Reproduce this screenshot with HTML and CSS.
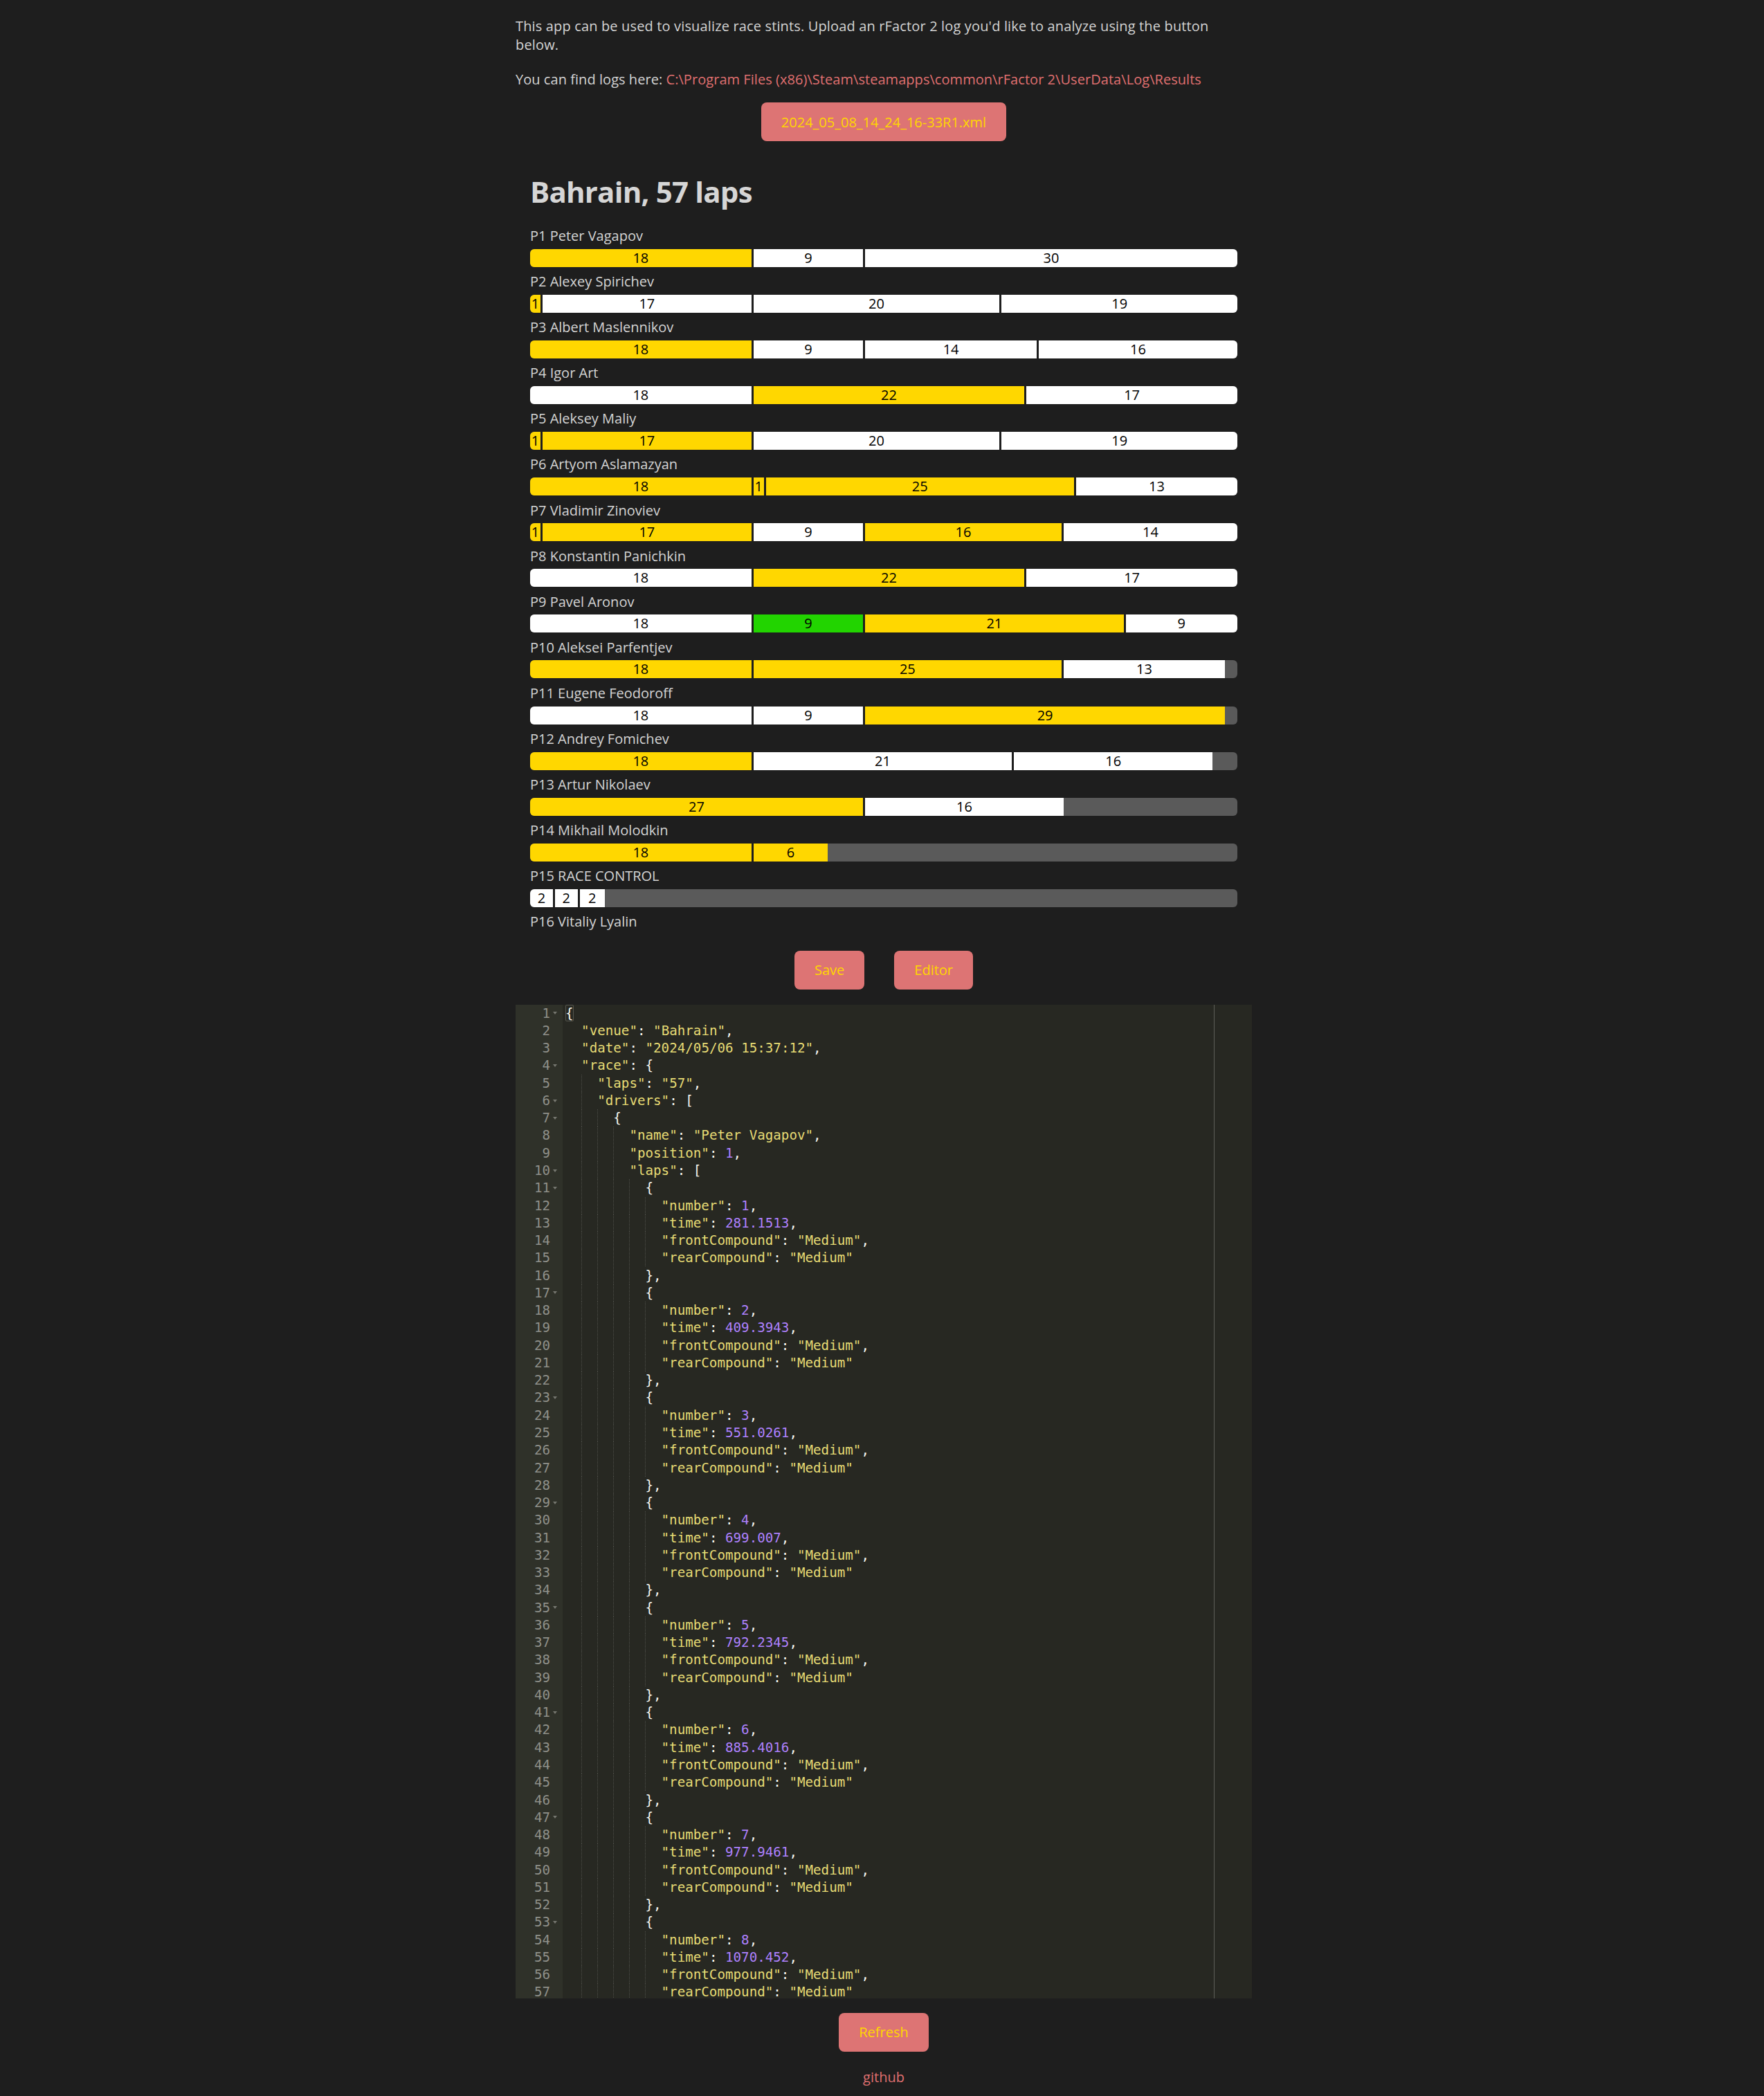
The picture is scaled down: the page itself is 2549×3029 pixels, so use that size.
FILE: index.html
```html
<!DOCTYPE html>
<html lang="en">
<head>
<meta charset="utf-8">
<title>Race stints</title>
<link rel="stylesheet" href="styles.css">
</head>
<body>
<div class="page">
  <p class="intro intro-first">This app can be used to visualize race stints. Upload an rFactor 2 log you'd like to analyze using the button below.</p>
  <p class="intro intro-logs">You can find logs here: <a class="path">C:\Program Files (x86)\Steam\steamapps\common\rFactor 2\UserData\Log\Results</a></p>
  <div class="btn-row upload"><button class="btn">2024_05_08_14_24_16-33R1.xml</button></div>

  <section class="chart">
    <h1 class="chart-title">Bahrain, 57 laps</h1>
    <div class="driver"><div class="dname">P1 Peter Vagapov</div><div class="track"><div class="seg tyre-m" style="width:31.579%">18</div><div class="seg tyre-h" style="width:15.789%">9</div><div class="seg tyre-h" style="width:52.632%">30</div></div></div>
    <div class="driver"><div class="dname">P2 Alexey Spirichev</div><div class="track"><div class="seg tyre-m" style="width:1.754%">1</div><div class="seg tyre-h" style="width:29.825%">17</div><div class="seg tyre-h" style="width:35.088%">20</div><div class="seg tyre-h" style="width:33.333%">19</div></div></div>
    <div class="driver"><div class="dname">P3 Albert Maslennikov</div><div class="track"><div class="seg tyre-m" style="width:31.579%">18</div><div class="seg tyre-h" style="width:15.789%">9</div><div class="seg tyre-h" style="width:24.561%">14</div><div class="seg tyre-h" style="width:28.070%">16</div></div></div>
    <div class="driver"><div class="dname">P4 Igor Art</div><div class="track"><div class="seg tyre-h" style="width:31.579%">18</div><div class="seg tyre-m" style="width:38.596%">22</div><div class="seg tyre-h" style="width:29.825%">17</div></div></div>
    <div class="driver"><div class="dname">P5 Aleksey Maliy</div><div class="track"><div class="seg tyre-m" style="width:1.754%">1</div><div class="seg tyre-m" style="width:29.825%">17</div><div class="seg tyre-h" style="width:35.088%">20</div><div class="seg tyre-h" style="width:33.333%">19</div></div></div>
    <div class="driver"><div class="dname">P6 Artyom Aslamazyan</div><div class="track"><div class="seg tyre-m" style="width:31.579%">18</div><div class="seg tyre-m" style="width:1.754%">1</div><div class="seg tyre-m" style="width:43.860%">25</div><div class="seg tyre-h" style="width:22.807%">13</div></div></div>
    <div class="driver"><div class="dname">P7 Vladimir Zinoviev</div><div class="track"><div class="seg tyre-m" style="width:1.754%">1</div><div class="seg tyre-m" style="width:29.825%">17</div><div class="seg tyre-h" style="width:15.789%">9</div><div class="seg tyre-m" style="width:28.070%">16</div><div class="seg tyre-h" style="width:24.561%">14</div></div></div>
    <div class="driver"><div class="dname">P8 Konstantin Panichkin</div><div class="track"><div class="seg tyre-h" style="width:31.579%">18</div><div class="seg tyre-m" style="width:38.596%">22</div><div class="seg tyre-h" style="width:29.825%">17</div></div></div>
    <div class="driver"><div class="dname">P9 Pavel Aronov</div><div class="track"><div class="seg tyre-h" style="width:31.579%">18</div><div class="seg tyre-s" style="width:15.789%">9</div><div class="seg tyre-m" style="width:36.842%">21</div><div class="seg tyre-h" style="width:15.789%">9</div></div></div>
    <div class="driver"><div class="dname">P10 Aleksei Parfentjev</div><div class="track"><div class="seg tyre-m" style="width:31.579%">18</div><div class="seg tyre-m" style="width:43.860%">25</div><div class="seg tyre-h" style="width:22.807%">13</div></div></div>
    <div class="driver"><div class="dname">P11 Eugene Feodoroff</div><div class="track"><div class="seg tyre-h" style="width:31.579%">18</div><div class="seg tyre-h" style="width:15.789%">9</div><div class="seg tyre-m" style="width:50.877%">29</div></div></div>
    <div class="driver"><div class="dname">P12 Andrey Fomichev</div><div class="track"><div class="seg tyre-m" style="width:31.579%">18</div><div class="seg tyre-h" style="width:36.842%">21</div><div class="seg tyre-h" style="width:28.070%">16</div></div></div>
    <div class="driver"><div class="dname">P13 Artur Nikolaev</div><div class="track"><div class="seg tyre-m" style="width:47.368%">27</div><div class="seg tyre-h" style="width:28.070%">16</div></div></div>
    <div class="driver"><div class="dname">P14 Mikhail Molodkin</div><div class="track"><div class="seg tyre-m" style="width:31.579%">18</div><div class="seg tyre-m" style="width:10.526%">6</div></div></div>
    <div class="driver"><div class="dname">P15 RACE CONTROL</div><div class="track"><div class="seg tyre-h" style="width:3.509%">2</div><div class="seg tyre-h" style="width:3.509%">2</div><div class="seg tyre-h" style="width:3.509%">2</div></div></div>
    <div class="driver"><div class="dname">P16 Vitaliy Lyalin</div></div>
  </section>

  <div class="btn-row actions"><button class="btn">Save</button><button class="btn">Editor</button></div>

  <div class="editor">
    <div class="gutter">
      <div class="gc">1<span class="fw on"></span></div>
      <div class="gc">2<span class="fw"></span></div>
      <div class="gc">3<span class="fw"></span></div>
      <div class="gc">4<span class="fw on"></span></div>
      <div class="gc">5<span class="fw"></span></div>
      <div class="gc">6<span class="fw on"></span></div>
      <div class="gc">7<span class="fw on"></span></div>
      <div class="gc">8<span class="fw"></span></div>
      <div class="gc">9<span class="fw"></span></div>
      <div class="gc">10<span class="fw on"></span></div>
      <div class="gc">11<span class="fw on"></span></div>
      <div class="gc">12<span class="fw"></span></div>
      <div class="gc">13<span class="fw"></span></div>
      <div class="gc">14<span class="fw"></span></div>
      <div class="gc">15<span class="fw"></span></div>
      <div class="gc">16<span class="fw"></span></div>
      <div class="gc">17<span class="fw on"></span></div>
      <div class="gc">18<span class="fw"></span></div>
      <div class="gc">19<span class="fw"></span></div>
      <div class="gc">20<span class="fw"></span></div>
      <div class="gc">21<span class="fw"></span></div>
      <div class="gc">22<span class="fw"></span></div>
      <div class="gc">23<span class="fw on"></span></div>
      <div class="gc">24<span class="fw"></span></div>
      <div class="gc">25<span class="fw"></span></div>
      <div class="gc">26<span class="fw"></span></div>
      <div class="gc">27<span class="fw"></span></div>
      <div class="gc">28<span class="fw"></span></div>
      <div class="gc">29<span class="fw on"></span></div>
      <div class="gc">30<span class="fw"></span></div>
      <div class="gc">31<span class="fw"></span></div>
      <div class="gc">32<span class="fw"></span></div>
      <div class="gc">33<span class="fw"></span></div>
      <div class="gc">34<span class="fw"></span></div>
      <div class="gc">35<span class="fw on"></span></div>
      <div class="gc">36<span class="fw"></span></div>
      <div class="gc">37<span class="fw"></span></div>
      <div class="gc">38<span class="fw"></span></div>
      <div class="gc">39<span class="fw"></span></div>
      <div class="gc">40<span class="fw"></span></div>
      <div class="gc">41<span class="fw on"></span></div>
      <div class="gc">42<span class="fw"></span></div>
      <div class="gc">43<span class="fw"></span></div>
      <div class="gc">44<span class="fw"></span></div>
      <div class="gc">45<span class="fw"></span></div>
      <div class="gc">46<span class="fw"></span></div>
      <div class="gc">47<span class="fw on"></span></div>
      <div class="gc">48<span class="fw"></span></div>
      <div class="gc">49<span class="fw"></span></div>
      <div class="gc">50<span class="fw"></span></div>
      <div class="gc">51<span class="fw"></span></div>
      <div class="gc">52<span class="fw"></span></div>
      <div class="gc">53<span class="fw on"></span></div>
      <div class="gc">54<span class="fw"></span></div>
      <div class="gc">55<span class="fw"></span></div>
      <div class="gc">56<span class="fw"></span></div>
      <div class="gc">57<span class="fw"></span></div>
    </div>
    <div class="code">
      <div class="cl"><span class="c"><span class="br">{</span></span></div>
      <div class="cl"><span class="ind"></span><span class="c"><span class="s">"venue"</span>: <span class="s">"Bahrain"</span>,</span></div>
      <div class="cl"><span class="ind"></span><span class="c"><span class="s">"date"</span>: <span class="s">"2024/05/06 15:37:12"</span>,</span></div>
      <div class="cl"><span class="ind"></span><span class="c"><span class="s">"race"</span>: {</span></div>
      <div class="cl"><span class="ind"></span><span class="ind g"></span><span class="c"><span class="s">"laps"</span>: <span class="s">"57"</span>,</span></div>
      <div class="cl"><span class="ind"></span><span class="ind g"></span><span class="c"><span class="s">"drivers"</span>: [</span></div>
      <div class="cl"><span class="ind"></span><span class="ind g"></span><span class="ind g"></span><span class="c">{</span></div>
      <div class="cl"><span class="ind"></span><span class="ind g"></span><span class="ind g"></span><span class="ind g"></span><span class="c"><span class="s">"name"</span>: <span class="s">"Peter Vagapov"</span>,</span></div>
      <div class="cl"><span class="ind"></span><span class="ind g"></span><span class="ind g"></span><span class="ind g"></span><span class="c"><span class="s">"position"</span>: <span class="n">1</span>,</span></div>
      <div class="cl"><span class="ind"></span><span class="ind g"></span><span class="ind g"></span><span class="ind g"></span><span class="c"><span class="s">"laps"</span>: [</span></div>
      <div class="cl"><span class="ind"></span><span class="ind g"></span><span class="ind g"></span><span class="ind g"></span><span class="ind g"></span><span class="c">{</span></div>
      <div class="cl"><span class="ind"></span><span class="ind g"></span><span class="ind g"></span><span class="ind g"></span><span class="ind g"></span><span class="ind g"></span><span class="c"><span class="s">"number"</span>: <span class="n">1</span>,</span></div>
      <div class="cl"><span class="ind"></span><span class="ind g"></span><span class="ind g"></span><span class="ind g"></span><span class="ind g"></span><span class="ind g"></span><span class="c"><span class="s">"time"</span>: <span class="n">281.1513</span>,</span></div>
      <div class="cl"><span class="ind"></span><span class="ind g"></span><span class="ind g"></span><span class="ind g"></span><span class="ind g"></span><span class="ind g"></span><span class="c"><span class="s">"frontCompound"</span>: <span class="s">"Medium"</span>,</span></div>
      <div class="cl"><span class="ind"></span><span class="ind g"></span><span class="ind g"></span><span class="ind g"></span><span class="ind g"></span><span class="ind g"></span><span class="c"><span class="s">"rearCompound"</span>: <span class="s">"Medium"</span></span></div>
      <div class="cl"><span class="ind"></span><span class="ind g"></span><span class="ind g"></span><span class="ind g"></span><span class="ind g"></span><span class="c">},</span></div>
      <div class="cl"><span class="ind"></span><span class="ind g"></span><span class="ind g"></span><span class="ind g"></span><span class="ind g"></span><span class="c">{</span></div>
      <div class="cl"><span class="ind"></span><span class="ind g"></span><span class="ind g"></span><span class="ind g"></span><span class="ind g"></span><span class="ind g"></span><span class="c"><span class="s">"number"</span>: <span class="n">2</span>,</span></div>
      <div class="cl"><span class="ind"></span><span class="ind g"></span><span class="ind g"></span><span class="ind g"></span><span class="ind g"></span><span class="ind g"></span><span class="c"><span class="s">"time"</span>: <span class="n">409.3943</span>,</span></div>
      <div class="cl"><span class="ind"></span><span class="ind g"></span><span class="ind g"></span><span class="ind g"></span><span class="ind g"></span><span class="ind g"></span><span class="c"><span class="s">"frontCompound"</span>: <span class="s">"Medium"</span>,</span></div>
      <div class="cl"><span class="ind"></span><span class="ind g"></span><span class="ind g"></span><span class="ind g"></span><span class="ind g"></span><span class="ind g"></span><span class="c"><span class="s">"rearCompound"</span>: <span class="s">"Medium"</span></span></div>
      <div class="cl"><span class="ind"></span><span class="ind g"></span><span class="ind g"></span><span class="ind g"></span><span class="ind g"></span><span class="c">},</span></div>
      <div class="cl"><span class="ind"></span><span class="ind g"></span><span class="ind g"></span><span class="ind g"></span><span class="ind g"></span><span class="c">{</span></div>
      <div class="cl"><span class="ind"></span><span class="ind g"></span><span class="ind g"></span><span class="ind g"></span><span class="ind g"></span><span class="ind g"></span><span class="c"><span class="s">"number"</span>: <span class="n">3</span>,</span></div>
      <div class="cl"><span class="ind"></span><span class="ind g"></span><span class="ind g"></span><span class="ind g"></span><span class="ind g"></span><span class="ind g"></span><span class="c"><span class="s">"time"</span>: <span class="n">551.0261</span>,</span></div>
      <div class="cl"><span class="ind"></span><span class="ind g"></span><span class="ind g"></span><span class="ind g"></span><span class="ind g"></span><span class="ind g"></span><span class="c"><span class="s">"frontCompound"</span>: <span class="s">"Medium"</span>,</span></div>
      <div class="cl"><span class="ind"></span><span class="ind g"></span><span class="ind g"></span><span class="ind g"></span><span class="ind g"></span><span class="ind g"></span><span class="c"><span class="s">"rearCompound"</span>: <span class="s">"Medium"</span></span></div>
      <div class="cl"><span class="ind"></span><span class="ind g"></span><span class="ind g"></span><span class="ind g"></span><span class="ind g"></span><span class="c">},</span></div>
      <div class="cl"><span class="ind"></span><span class="ind g"></span><span class="ind g"></span><span class="ind g"></span><span class="ind g"></span><span class="c">{</span></div>
      <div class="cl"><span class="ind"></span><span class="ind g"></span><span class="ind g"></span><span class="ind g"></span><span class="ind g"></span><span class="ind g"></span><span class="c"><span class="s">"number"</span>: <span class="n">4</span>,</span></div>
      <div class="cl"><span class="ind"></span><span class="ind g"></span><span class="ind g"></span><span class="ind g"></span><span class="ind g"></span><span class="ind g"></span><span class="c"><span class="s">"time"</span>: <span class="n">699.007</span>,</span></div>
      <div class="cl"><span class="ind"></span><span class="ind g"></span><span class="ind g"></span><span class="ind g"></span><span class="ind g"></span><span class="ind g"></span><span class="c"><span class="s">"frontCompound"</span>: <span class="s">"Medium"</span>,</span></div>
      <div class="cl"><span class="ind"></span><span class="ind g"></span><span class="ind g"></span><span class="ind g"></span><span class="ind g"></span><span class="ind g"></span><span class="c"><span class="s">"rearCompound"</span>: <span class="s">"Medium"</span></span></div>
      <div class="cl"><span class="ind"></span><span class="ind g"></span><span class="ind g"></span><span class="ind g"></span><span class="ind g"></span><span class="c">},</span></div>
      <div class="cl"><span class="ind"></span><span class="ind g"></span><span class="ind g"></span><span class="ind g"></span><span class="ind g"></span><span class="c">{</span></div>
      <div class="cl"><span class="ind"></span><span class="ind g"></span><span class="ind g"></span><span class="ind g"></span><span class="ind g"></span><span class="ind g"></span><span class="c"><span class="s">"number"</span>: <span class="n">5</span>,</span></div>
      <div class="cl"><span class="ind"></span><span class="ind g"></span><span class="ind g"></span><span class="ind g"></span><span class="ind g"></span><span class="ind g"></span><span class="c"><span class="s">"time"</span>: <span class="n">792.2345</span>,</span></div>
      <div class="cl"><span class="ind"></span><span class="ind g"></span><span class="ind g"></span><span class="ind g"></span><span class="ind g"></span><span class="ind g"></span><span class="c"><span class="s">"frontCompound"</span>: <span class="s">"Medium"</span>,</span></div>
      <div class="cl"><span class="ind"></span><span class="ind g"></span><span class="ind g"></span><span class="ind g"></span><span class="ind g"></span><span class="ind g"></span><span class="c"><span class="s">"rearCompound"</span>: <span class="s">"Medium"</span></span></div>
      <div class="cl"><span class="ind"></span><span class="ind g"></span><span class="ind g"></span><span class="ind g"></span><span class="ind g"></span><span class="c">},</span></div>
      <div class="cl"><span class="ind"></span><span class="ind g"></span><span class="ind g"></span><span class="ind g"></span><span class="ind g"></span><span class="c">{</span></div>
      <div class="cl"><span class="ind"></span><span class="ind g"></span><span class="ind g"></span><span class="ind g"></span><span class="ind g"></span><span class="ind g"></span><span class="c"><span class="s">"number"</span>: <span class="n">6</span>,</span></div>
      <div class="cl"><span class="ind"></span><span class="ind g"></span><span class="ind g"></span><span class="ind g"></span><span class="ind g"></span><span class="ind g"></span><span class="c"><span class="s">"time"</span>: <span class="n">885.4016</span>,</span></div>
      <div class="cl"><span class="ind"></span><span class="ind g"></span><span class="ind g"></span><span class="ind g"></span><span class="ind g"></span><span class="ind g"></span><span class="c"><span class="s">"frontCompound"</span>: <span class="s">"Medium"</span>,</span></div>
      <div class="cl"><span class="ind"></span><span class="ind g"></span><span class="ind g"></span><span class="ind g"></span><span class="ind g"></span><span class="ind g"></span><span class="c"><span class="s">"rearCompound"</span>: <span class="s">"Medium"</span></span></div>
      <div class="cl"><span class="ind"></span><span class="ind g"></span><span class="ind g"></span><span class="ind g"></span><span class="ind g"></span><span class="c">},</span></div>
      <div class="cl"><span class="ind"></span><span class="ind g"></span><span class="ind g"></span><span class="ind g"></span><span class="ind g"></span><span class="c">{</span></div>
      <div class="cl"><span class="ind"></span><span class="ind g"></span><span class="ind g"></span><span class="ind g"></span><span class="ind g"></span><span class="ind g"></span><span class="c"><span class="s">"number"</span>: <span class="n">7</span>,</span></div>
      <div class="cl"><span class="ind"></span><span class="ind g"></span><span class="ind g"></span><span class="ind g"></span><span class="ind g"></span><span class="ind g"></span><span class="c"><span class="s">"time"</span>: <span class="n">977.9461</span>,</span></div>
      <div class="cl"><span class="ind"></span><span class="ind g"></span><span class="ind g"></span><span class="ind g"></span><span class="ind g"></span><span class="ind g"></span><span class="c"><span class="s">"frontCompound"</span>: <span class="s">"Medium"</span>,</span></div>
      <div class="cl"><span class="ind"></span><span class="ind g"></span><span class="ind g"></span><span class="ind g"></span><span class="ind g"></span><span class="ind g"></span><span class="c"><span class="s">"rearCompound"</span>: <span class="s">"Medium"</span></span></div>
      <div class="cl"><span class="ind"></span><span class="ind g"></span><span class="ind g"></span><span class="ind g"></span><span class="ind g"></span><span class="c">},</span></div>
      <div class="cl"><span class="ind"></span><span class="ind g"></span><span class="ind g"></span><span class="ind g"></span><span class="ind g"></span><span class="c">{</span></div>
      <div class="cl"><span class="ind"></span><span class="ind g"></span><span class="ind g"></span><span class="ind g"></span><span class="ind g"></span><span class="ind g"></span><span class="c"><span class="s">"number"</span>: <span class="n">8</span>,</span></div>
      <div class="cl"><span class="ind"></span><span class="ind g"></span><span class="ind g"></span><span class="ind g"></span><span class="ind g"></span><span class="ind g"></span><span class="c"><span class="s">"time"</span>: <span class="n">1070.452</span>,</span></div>
      <div class="cl"><span class="ind"></span><span class="ind g"></span><span class="ind g"></span><span class="ind g"></span><span class="ind g"></span><span class="ind g"></span><span class="c"><span class="s">"frontCompound"</span>: <span class="s">"Medium"</span>,</span></div>
      <div class="cl"><span class="ind"></span><span class="ind g"></span><span class="ind g"></span><span class="ind g"></span><span class="ind g"></span><span class="ind g"></span><span class="c"><span class="s">"rearCompound"</span>: <span class="s">"Medium"</span></span></div>
    </div>
    <div class="print-margin"></div>
  </div>

  <div class="btn-row refresh"><button class="btn">Refresh</button></div>
  <div class="footer"><a class="gh">github</a></div>
</div>
</body>
</html>
```

FILE: styles.css
```css
* { box-sizing: border-box; }

body {
  margin: 0;
  background: #1e1e1e;
  color: #d4d4d4;
  font-family: "Open Sans", "Noto Sans", sans-serif;
  font-size: 20px;
  line-height: 27px;
}

.page {
  width: 1069px;
  margin: 0 auto;
  padding: 24px 0 0 5px;
}

.intro {
  margin: 0;
  letter-spacing: 0.15px;
}
.intro + .intro { margin-top: 23px; }
.intro-first { max-width: 1030px; }
.intro-logs { letter-spacing: 0.05px; }

.path, .gh {
  color: #e07070;
  text-decoration: none;
}

.btn-row {
  display: flex;
  justify-content: center;
  gap: 43px;
}

.btn {
  height: 56px;
  padding: 0 29px;
  border: none;
  border-radius: 8px;
  background: #dd7474;
  color: #ffd700;
  font-family: inherit;
  font-size: 20px;
}

.upload { margin-top: 20px; }

.chart { padding: 0 21px; }

.chart-title {
  margin: 48px 0 25px;
  font-size: 42px;
  line-height: 50px;
  font-weight: 700;
  letter-spacing: -0.8px;
  color: #d6d6d6;
}

.driver { margin-bottom: 7.5px; }

.track {
  display: flex;
  height: 26px;
  margin-top: 5.6px;
  background: #5a5a5a;
  border-radius: 6px;
  overflow: hidden;
}

.seg {
  height: 100%;
  line-height: 26px;
  text-align: center;
  color: #000;
  overflow: hidden;
  white-space: nowrap;
}
.seg:not(:last-child) { border-right: 3px solid #1e1e1e; }

.tyre-m { background: #ffd700; }
.tyre-h { background: #ffffff; }
.tyre-s { background: #22d400; }

.actions { margin-top: 28.2px; }

.editor {
  position: relative;
  display: flex;
  height: 1436px;
  margin-top: 22px;
  overflow: hidden;
  background: #272822;
  color: #f8f8f2;
  font-family: "DejaVu Sans Mono", monospace;
  font-size: 19.2px;
  line-height: 25.27px;
}

.gutter {
  flex: none;
  width: 68px;
  background: #2f3129;
  color: #8f908a;
}

.gc {
  display: flex;
  justify-content: flex-end;
  align-items: center;
  height: 25.27px;
  padding-right: 4px;
}

.fw {
  display: flex;
  justify-content: center;
  width: 14px;
}
.fw.on::before {
  content: "";
  border-left: 3px solid transparent;
  border-right: 3px solid transparent;
  border-top: 4px solid #75766f;
}

.code {
  flex: 1;
  padding-left: 4px;
}

.cl {
  display: flex;
  height: 25.27px;
  white-space: pre;
}

.ind {
  flex: none;
  width: 2ch;
}
.ind.g {
  background: linear-gradient(#4d4e48 50%, transparent 50%) 0 0 / 1px 2px repeat-y;
}

.s { color: #e6db74; }
.n { color: #ae81ff; }

.br {
  display: inline-block;
  height: 24px;
  box-shadow: inset 0 0 0 1px #55564f;
  border-radius: 2px;
}

.print-margin {
  position: absolute;
  top: 0;
  bottom: 0;
  left: 1009px;
  width: 1px;
  background: #5d5e58;
}

.refresh { margin-top: 21px; }

.footer {
  margin-top: 23.7px;
  text-align: center;
}
```
